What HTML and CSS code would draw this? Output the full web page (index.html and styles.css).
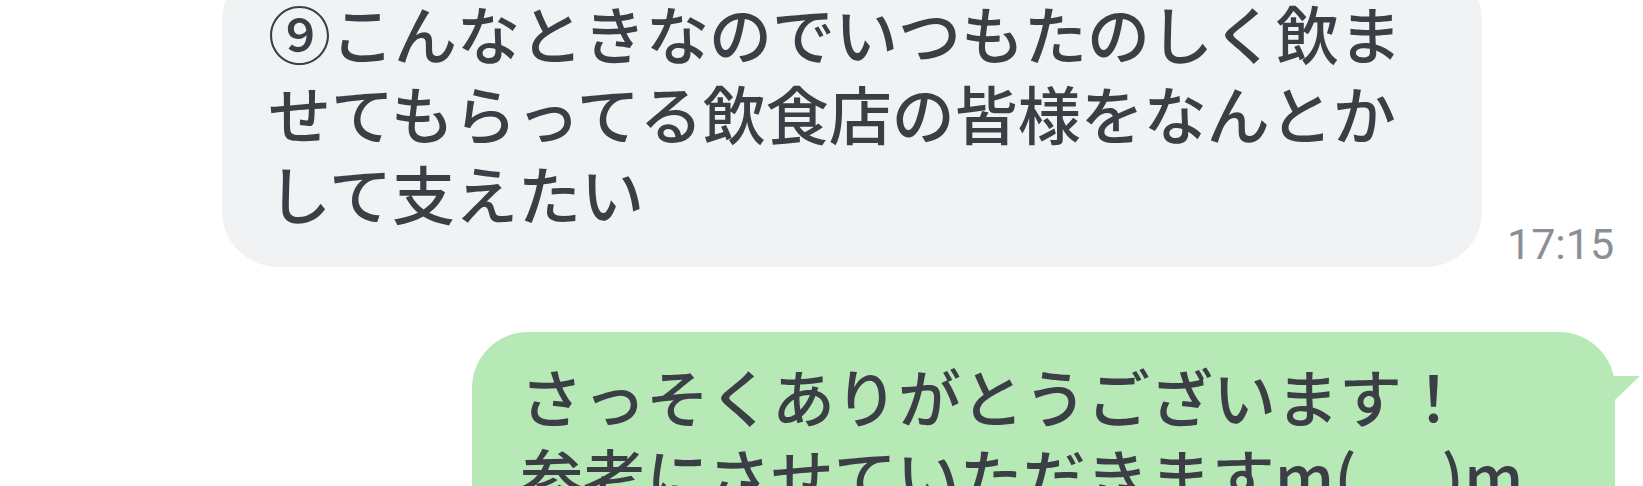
FILE: index.html
```html
<!DOCTYPE html>
<html lang="ja">
<head>
<meta charset="utf-8">
<link rel="stylesheet" href="styles.css">
</head>
<body>
<div class="chat">
  <div class="row row-in">
    <div class="bubble bubble-in">⑨こんなときなのでいつもたのしく飲ませてもらってる飲食店の皆様をなんとかして支えたい</div>
    <div class="time">17:15</div>
  </div>
  <div class="row row-out">
    <div class="bubble bubble-out">さっそくありがとうございます！<br>参考にさせていただきますm(_ _)m</div>
  </div>
</div>
</body>
</html>
```
FILE: styles.css
```css
html, body {
  margin: 0;
  padding: 0;
  background: #ffffff;
}
body {
  width: 1643px;
  height: 486px;
  overflow: hidden;
  font-family: "Noto Sans CJK JP", "Noto Sans", sans-serif;
  color: #3b3f45;
}
.chat {
  display: flex;
  flex-direction: column;
  gap: 65px;
  margin-top: -36px;
}
.row {
  display: flex;
  align-items: flex-end;
}
.row-in {
  padding-left: 222px;
  gap: 25px;
}
.row-out {
  justify-content: flex-end;
  padding-right: 28px;
}
.bubble {
  box-sizing: border-box;
  font-size: 63px;
  font-weight: 500;
  line-height: 80px;
  padding: 28px 40px 35px 46px;
  border-radius: 56px;
  word-break: break-all;
}
.bubble-in {
  width: 1260px;
  background: #f1f2f4;
}
.bubble-out {
  width: 1143px;
  height: 240px;
  background: #b7e9b7;
  position: relative;
  padding-top: 23px;
  padding-left: 48px;
}
.bubble-out::after {
  content: "";
  position: absolute;
  right: -25px;
  top: 44px;
  width: 40px;
  height: 24px;
  background: #b7e9b7;
  clip-path: polygon(0 0, 100% 0, 37% 100%, 0 100%);
}
.time {
  font-family: Roboto, "Liberation Sans", sans-serif;
  font-size: 43px;
  line-height: 43px;
  color: #8a8f97;
  margin-bottom: 1px;
}
```
